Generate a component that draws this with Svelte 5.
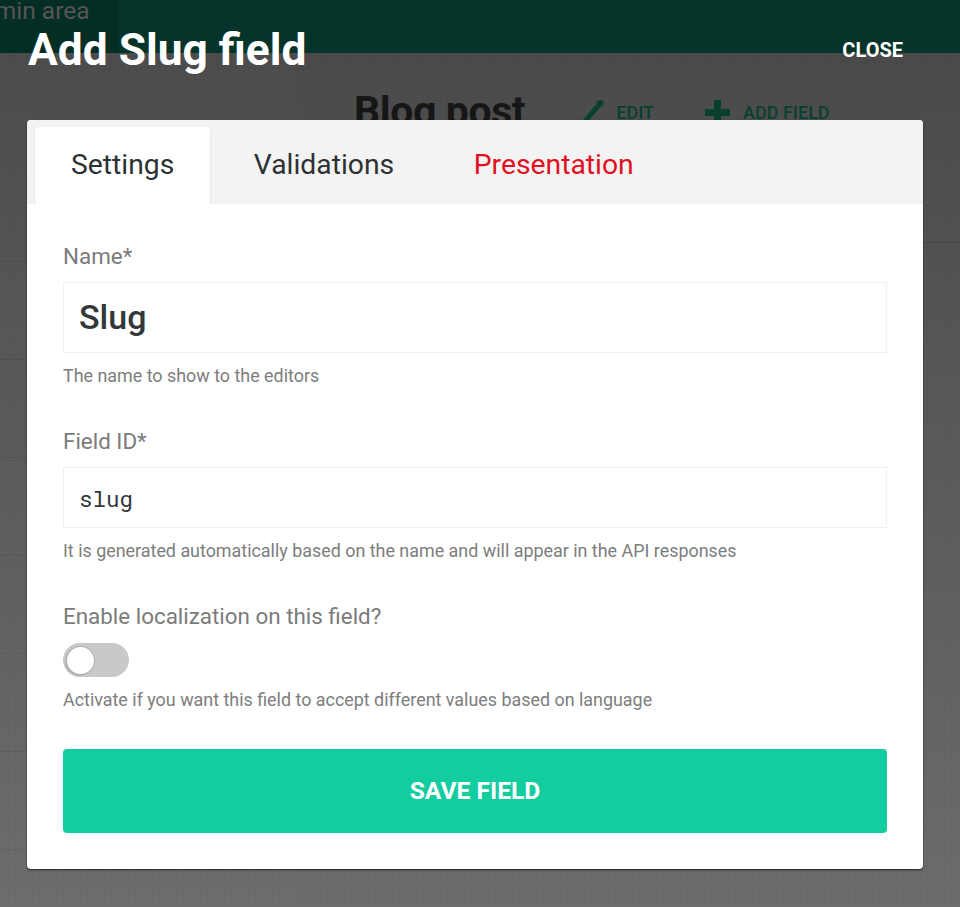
<script lang="ts">
  let localized = $state(false);
  const tabs = [
    { label: 'Settings', active: true },
    { label: 'Validations' },
    { label: 'Presentation', error: true }
  ];
  // faint rows of the page behind the dim layer
  const sideRows = [0, 1, 2, 3, 4, 5, 6];
</script>

<div class="page">
  <header class="topbar">
    <div class="brand">Admin area</div>
  </header>
  <div class="under">
    <aside class="sidebar">
      {#each sideRows as r (r)}
        <div class="side-row"></div>
      {/each}
    </aside>
    <main class="content">
      <div class="content-head">
        <h2>Blog post</h2>
        <span class="action edit">
          <svg width="24" height="26" viewBox="0 0 24 26"><path d="M2 25L18 6" fill="none" stroke="#07402f" stroke-width="5"/><circle cx="20" cy="3.5" r="3.5" fill="#07402f"/></svg>
          EDIT
        </span>
        <span class="action add">
          <svg width="25" height="26" viewBox="0 0 25 26"><path d="M9 0h7v9h9v7h-9v10H9V16H0V9h9z" fill="#07402f"/></svg>
          ADD FIELD
        </span>
      </div>
    </main>
  </div>
</div>

<div class="overlay">
  <div class="overlay-head">
    <h1>Add Slug field</h1>
    <span class="close">CLOSE</span>
  </div>

  <section class="dialog">
    <nav class="tabs">
      {#each tabs as tab (tab.label)}
        <div class="tab" class:active={tab.active} class:error={tab.error}>{tab.label}</div>
      {/each}
    </nav>

    <div class="form">
      <div class="field">
        <div class="label">Name*</div>
        <div class="input title">Slug</div>
        <div class="hint">The name to show to the editors</div>
      </div>

      <div class="field">
        <div class="label">Field ID*</div>
        <div class="input mono">slug</div>
        <div class="hint">It is generated automatically based on the name and will appear in the API responses</div>
      </div>

      <div class="field">
        <div class="label">Enable localization on this field?</div>
        <button class="switch" class:on={localized} aria-label="Enable localization" onclick={() => (localized = !localized)}>
          <span class="knob"></span>
        </button>
        <div class="hint">Activate if you want this field to accept different values based on language</div>
      </div>

      <button class="save">SAVE FIELD</button>
    </div>
  </section>
</div>

<style>
  :global(body) {
    margin: 0;
    background: #666;
    font-family: Roboto, "Liberation Sans", sans-serif;
  }

  .page {
    height: 907px;
    overflow: hidden;
    display: flex;
    flex-direction: column;
    background: linear-gradient(#4a4a4a 6%, #6c6c6c);
  }
  .topbar {
    height: 53px;
    flex: none;
    background: #05352a;
    overflow: hidden;
  }
  .brand {
    width: 119px;
    height: 53px;
    background: #042d24;
    color: #555;
    font-size: 24.5px;
    line-height: 21px;
    white-space: nowrap;
    text-indent: -35px;
    overflow: hidden;
  }
  .under {
    flex: 1;
    display: flex;
    background-image: radial-gradient(rgba(0, 0, 0, 0.035) 1px, transparent 1px);
    background-size: 6px 6px;
  }
  .sidebar {
    width: 298px;
    padding-top: 111px;
    box-sizing: border-box;
    background: rgba(255, 255, 255, 0.012);
    overflow: hidden;
  }
  .side-row {
    height: 98px;
    box-sizing: border-box;
    border-bottom: 1px solid rgba(0, 0, 0, 0.07);
  }
  .content {
    flex: 1;
  }
  .content-head {
    height: 190px;
    box-sizing: border-box;
    padding: 34px 0 0 56px;
    display: flex;
    align-items: flex-start;
    border-bottom: 1px solid rgba(0, 0, 0, 0.1);
  }
  .content-head h2 {
    margin: 0;
    font-size: 41px;
    line-height: 48px;
    font-weight: 700;
    color: #161616;
    letter-spacing: -0.4px;
  }
  .action {
    display: flex;
    align-items: center;
    gap: 12px;
    margin-top: 2px;
    color: #07402f;
    font-size: 18px;
    font-weight: 500;
    line-height: 48px;
  }
  .action.edit {
    margin-left: 55px;
  }
  .action.add {
    margin-left: 51px;
    gap: 13px;
  }

  .overlay {
    position: absolute;
    inset: 0;
    height: 907px;
    box-sizing: border-box;
    padding: 0 37px 0 27px;
  }
  .overlay-head {
    height: 120px;
    display: flex;
    justify-content: space-between;
    align-items: flex-start;
  }
  h1 {
    margin: 23px 0 0 1px;
    font-size: 44.3px;
    line-height: 54px;
    font-weight: 700;
    color: #fff;
  }
  .close {
    margin: 38px 20px 0 0;
    font-size: 20px;
    line-height: 24px;
    font-weight: 700;
    color: #fff;
  }

  .dialog {
    height: 749px;
    background: #fff;
    border-radius: 4px;
    overflow: hidden;
    box-shadow: 0 1px 2px rgba(0, 0, 0, 0.7);
  }
  .tabs {
    height: 84px;
    padding: 7px 0 0 8px;
    box-sizing: border-box;
    display: flex;
    background: #f3f3f3;
  }
  .tab {
    padding: 0 36px 0 43.5px;
    line-height: 76px;
    font-size: 28.3px;
    color: #2d3133;
    white-space: nowrap;
  }
  .tab.active {
    padding: 0 36px;
    background: #fff;
    border-radius: 4px 4px 0 0;
    box-shadow: -1px 0 #e8e8e8, 1px 0 #e8e8e8;
  }
  .tab.error {
    color: #e0101e;
  }

  .form {
    padding: 35px 36px 0;
  }
  .field {
    margin-bottom: 35px;
  }
  .label {
    font-size: 22.4px;
    line-height: 34px;
    color: #7b7b7b;
  }
  .input {
    margin-top: 9px;
    border: 1px solid #f0f0f0;
    box-sizing: border-box;
    padding: 0 15px;
    color: #32383a;
  }
  .input.title {
    height: 71px;
    line-height: 69px;
    font-size: 34px;
    font-weight: 500;
  }
  .input.mono {
    height: 61px;
    line-height: 61px;
    font-size: 22.5px;
    font-family: "Roboto Mono", "DejaVu Sans Mono", "Liberation Mono", monospace;
  }
  .hint {
    margin-top: 9px;
    font-size: 17.9px;
    line-height: 27px;
    color: #7d7d7d;
  }
  .switch {
    display: block;
    margin: 10px 0 0;
    padding: 0;
    width: 66px;
    height: 34px;
    border: 0;
    border-radius: 17px;
    background: #c9c9c9;
    position: relative;
  }
  .knob {
    position: absolute;
    left: 4px;
    top: 3.5px;
    width: 27px;
    height: 27px;
    border-radius: 50%;
    background: #fff;
    box-shadow: 0 0 0 1px #b5b0b0, -1px 1px 2px rgba(0, 0, 0, 0.3);
  }
  .save {
    display: block;
    width: 100%;
    height: 84px;
    margin-top: 36px;
    padding: 0 0 2px;
    border: 0;
    border-radius: 4px;
    background: #13cda1;
    color: #fff;
    font-family: inherit;
    font-size: 24.6px;
    font-weight: 700;
  }
</style>
